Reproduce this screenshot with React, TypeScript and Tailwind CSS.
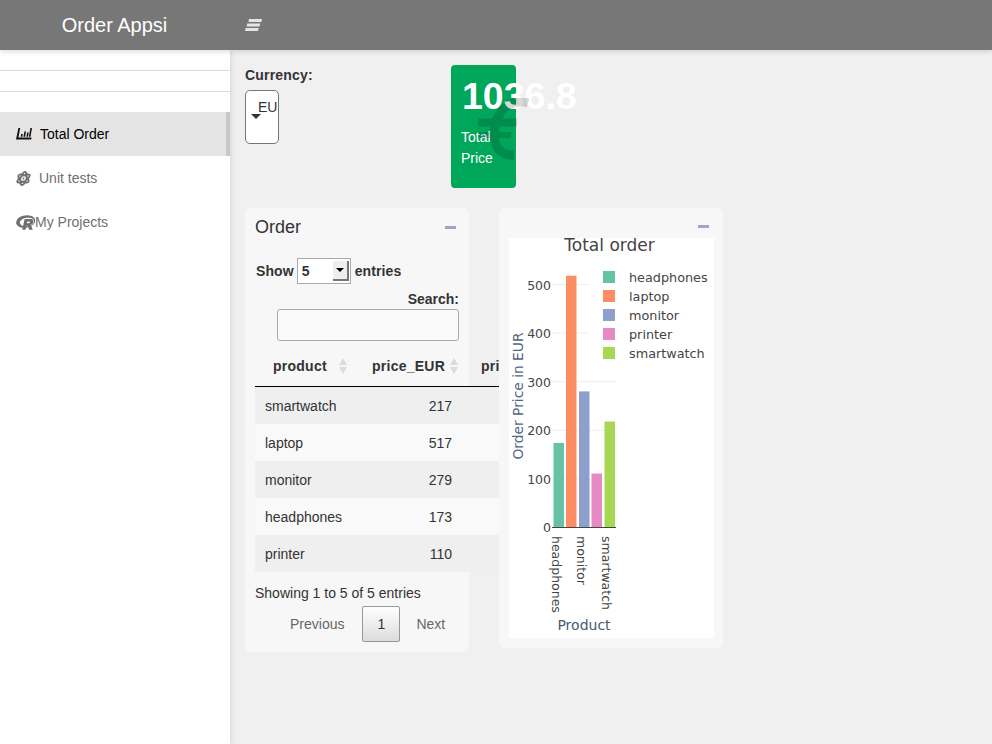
import { FaRProject } from "react-icons/fa6";
import { FaAtom } from "react-icons/fa";

const rows: [string, number][] = [
  ["smartwatch", 217],
  ["laptop", 517],
  ["monitor", 279],
  ["headphones", 173],
  ["printer", 110],
];

const bars = [
  { x: 553.5, value: 173, color: "#66c2a5" },
  { x: 566, value: 517, color: "#fc8d62" },
  { x: 579, value: 279, color: "#8da0cb" },
  { x: 591.5, value: 110, color: "#e78ac3" },
  { x: 604.5, value: 217, color: "#a6d854" },
];

const legend = [
  ["headphones", "#66c2a5"],
  ["laptop", "#fc8d62"],
  ["monitor", "#8da0cb"],
  ["printer", "#e78ac3"],
  ["smartwatch", "#a6d854"],
];

function SortArrows() {
  return (
    <svg width="8" height="16" viewBox="0 0 8 16" className="shrink-0">
      <path d="M4 0 8 7H0z" fill="#dcdcdc" />
      <path d="M4 16 0 9h8z" fill="#dcdcdc" />
    </svg>
  );
}

function BarLineIcon() {
  return (
    <svg width="16" height="12" viewBox="0 0 16 12" fill="#111" className="shrink-0">
      <path d="M2.400 0h1.800L2.400 9.600H15.500L15.200 11.500H0z" />
      <path d="M5.200 6h1.600L6.300 8.800H4.700zM8.400 3.500H10L9.100 8.800H7.500zM11.200 4.500h1.600L12 8.800h-1.600zM14.400 0H16l-1.500 8.800h-1.600z" />
    </svg>
  );
}

function MenuIcon() {
  return (
    <svg width="17" height="13" viewBox="0 0 17 13" fill="#e4e4e4">
      <path d="M4 0h13l-.6 3H3.400zM2.200 4.500h13l-.6 3h-13zM.6 9h13l-.6 3H0z" />
    </svg>
  );
}

function EuroIcon() {
  return (
    <svg width="52" height="64" viewBox="0 0 52 64" fill="none">
      <g opacity="0.15" stroke="#000">
        <path d="M50 5C36 1 21 8 17 28 14 46 20 58 36 57" strokeWidth="9" />
        <path d="M0 24.500h39" strokeWidth="8" />
        <path d="M0 37h33" strokeWidth="6" />
      </g>
    </svg>
  );
}

function PlotChart() {
  const axis = "#444";
  const ticks = [100, 200, 300, 400, 500];
  const font = { fontFamily: "'DejaVu Sans', sans-serif" };
  return (
    <svg width="205" height="400" viewBox="509 238 205 400" className="block bg-white" style={font}>
      <text x="609.500" y="251" textAnchor="middle" fontSize="17" fill="#444">
        Total order
      </text>
      {ticks.map((t) => (
        <line key={t} x1="552" x2={t > 300 ? 588 : 616} y1={527.500 - t * 0.486} y2={527.500 - t * 0.486} stroke="#eee" />
      ))}
      {bars.map((b) => (
        <rect key={b.x} x={b.x} width="10.500" y={527 - b.value * 0.486} height={b.value * 0.486} fill={b.color} />
      ))}
      <line x1="552" x2="616" y1="527.500" y2="527.500" stroke={axis} />
      <text x="551" y="532" textAnchor="end" fontSize="12.500" fill={axis}>0</text>
      {ticks.map((t) => (
        <text key={t} x="551" y={532.500 - t * 0.486} textAnchor="end" fontSize="12.500" fill={axis}>
          {t}
        </text>
      ))}
      <text transform="translate(523 396) rotate(-90)" textAnchor="middle" fontSize="13.800" fill="#506784">
        Order Price in EUR
      </text>
      {[
        ["headphones", 552],
        ["monitor", 577],
        ["smartwatch", 602],
      ].map(([label, x]) => (
        <text key={label} transform={`translate(${x} 536) rotate(90)`} fontSize="12.500" fill={axis}>
          {label}
        </text>
      ))}
      <text x="584" y="630" textAnchor="middle" fontSize="14" fill="#4a5a70">
        Product
      </text>
      {legend.map(([label, color], i) => (
        <g key={label}>
          <rect x="603" y={271 + i * 19} width="12" height="12" fill={color} />
          <text x="629" y={282 + i * 19} fontSize="12.800" fill="#444">
            {label}
          </text>
        </g>
      ))}
    </svg>
  );
}

export default function App() {
  return (
    <div className="flex h-[744px] w-[992px] flex-col overflow-hidden bg-[#f0f0f0] font-['Liberation_Sans',Arial,sans-serif] text-sm text-[#333]">
      <header className="z-20 flex h-[50px] shrink-0 bg-[#777777] text-white shadow-[0_2px_5px_rgba(0,0,0,0.12)]">
        <div className="flex w-[230px] items-center justify-center border-r border-[#747474] text-xl">Order Appsi</div>
        <div className="flex items-center pl-[15px]">
          <MenuIcon />
        </div>
      </header>

      <div className="flex min-h-0 flex-1">
        <aside className="z-10 w-[230px] shrink-0 bg-white pt-5 shadow-[1px_0_5px_rgba(0,0,0,0.12)]">
          <div className="h-[21px] border-t border-[#dcdcdc]" />
          <div className="h-[21px] border-t border-[#dcdcdc]" />
          <nav>
            <a className="flex h-11 items-center gap-2 border-r-4 border-[#c8c8c8] bg-[#e4e4e4] pl-4 text-black">
              <BarLineIcon />
              Total Order
            </a>
            <a className="flex h-11 items-center gap-2 pl-4 text-[#707070]">
              <FaAtom className="-skew-x-12 text-[15px]" />
              Unit tests
            </a>
            <a className="flex h-11 items-center pl-4 text-[#707070]">
              <FaRProject className="-skew-x-12 text-[19px]" />
              My Projects
            </a>
          </nav>
        </aside>

        <main className="relative min-w-0 flex-1 pl-[15px] pt-[15px]">
          <div className="flex h-[143px]">
            <div className="w-[206px] pt-[2px]">
              <p className="font-bold leading-[17px] tracking-[0.2px]">Currency:</p>
              <div className="relative mt-[6px] h-[54px] w-[34px] overflow-hidden rounded-[5px] border border-[#777] bg-white">
                <span className="absolute left-3 top-[6px] whitespace-nowrap">EUR</span>
                <span className="absolute left-[5px] top-[23px] border-x-[5px] border-t-[5px] border-x-transparent border-t-[#333]" />
              </div>
            </div>
            <div className="relative h-[123px] w-[65px] rounded-[4px] bg-[#00a65a] p-[10px] text-white">
              <p className="ml-px whitespace-nowrap text-[37.5px] font-bold leading-[42px]">1036.8</p>
              <p className="mt-[10px] leading-[21px]">Total Price</p>
              <div className="absolute left-[27px] top-[33px]">
                <EuroIcon />
              </div>
            </div>
          </div>

          <div className="flex items-start gap-[30px]">
            <section className="h-[444px] w-[224px] rounded-md bg-[#f7f7f7] px-[10px]">
              <div className="flex h-[38px] items-center justify-between pr-[3px]">
                <h3 className="text-lg">Order</h3>
                <span className="h-[3px] w-[11px] bg-[#a0a6c0]" />
              </div>
              <div className="flex h-[39px] items-center gap-[3px] pl-px pt-[11px] font-bold tracking-[0.1px]">
                <span>Show</span>
                <div className="flex h-[26px] w-[54px] items-center justify-between border border-[#aaa] bg-white pl-[4px] pr-px">
                  5
                  <span className="flex h-[20px] w-[16px] items-center justify-center border-b-2 border-r-2 border-[#777] bg-[#eee]">
                    <span className="border-x-[4px] border-t-[4px] border-x-transparent border-t-black" />
                  </span>
                </div>
                <span className="pl-px">entries</span>
              </div>
              <p className="mt-[6px] text-right font-bold leading-4">Search:</p>
              <div className="ml-[22px] mt-[2px] h-[32px] w-[182px] rounded-[3px] border border-[#aaa] bg-[#f9f9f9]" />

              <div className="mt-[5px] w-[300px]">
                <div className="flex h-[41px] items-center border-b border-black font-bold tracking-[0.25px]">
                  <div className="flex w-[100px] items-center gap-[12px] pl-[18px]">product<SortArrows /></div>
                  <div className="flex w-[108px] items-center gap-[5px] pl-[17px]">price_EUR<SortArrows /></div>
                  <div className="pl-[18px]">price</div>
                </div>
                {rows.map(([name, price], i) => (
                  <div key={name} className={`flex h-[37px] items-center ${i % 2 === 0 ? "bg-[#efefef]" : "bg-[#f9f9f9]"}`}>
                    <div className="w-[100px] pl-[10px]">{name}</div>
                    <div className="w-[97px] text-right">{price}</div>
                  </div>
                ))}
              </div>

              <p className="mt-[13px] leading-4">Showing 1 to 5 of 5 entries</p>
              <div className="mt-[5px] flex items-center">
                <span className="ml-[35px] text-[#666]">Previous</span>
                <span className="ml-[18px] flex h-[36px] w-[38px] items-center justify-center rounded-[2px] border border-[#979797] bg-linear-to-b from-white to-[#dcdcdc]">1</span>
                <span className="ml-[16px] text-[#666]">Next</span>
              </div>
            </section>

            <section className="relative z-10 h-[440px] w-[224px] rounded-md bg-[#f7f7f7] px-[10px]">
              <div className="flex h-[30px] items-center justify-end pr-[4px] pt-[6px]">
                <span className="h-[3px] w-[11px] bg-[#a0a6c0]" />
              </div>
              <PlotChart />
            </section>
          </div>
        </main>
      </div>
    </div>
  );
}
